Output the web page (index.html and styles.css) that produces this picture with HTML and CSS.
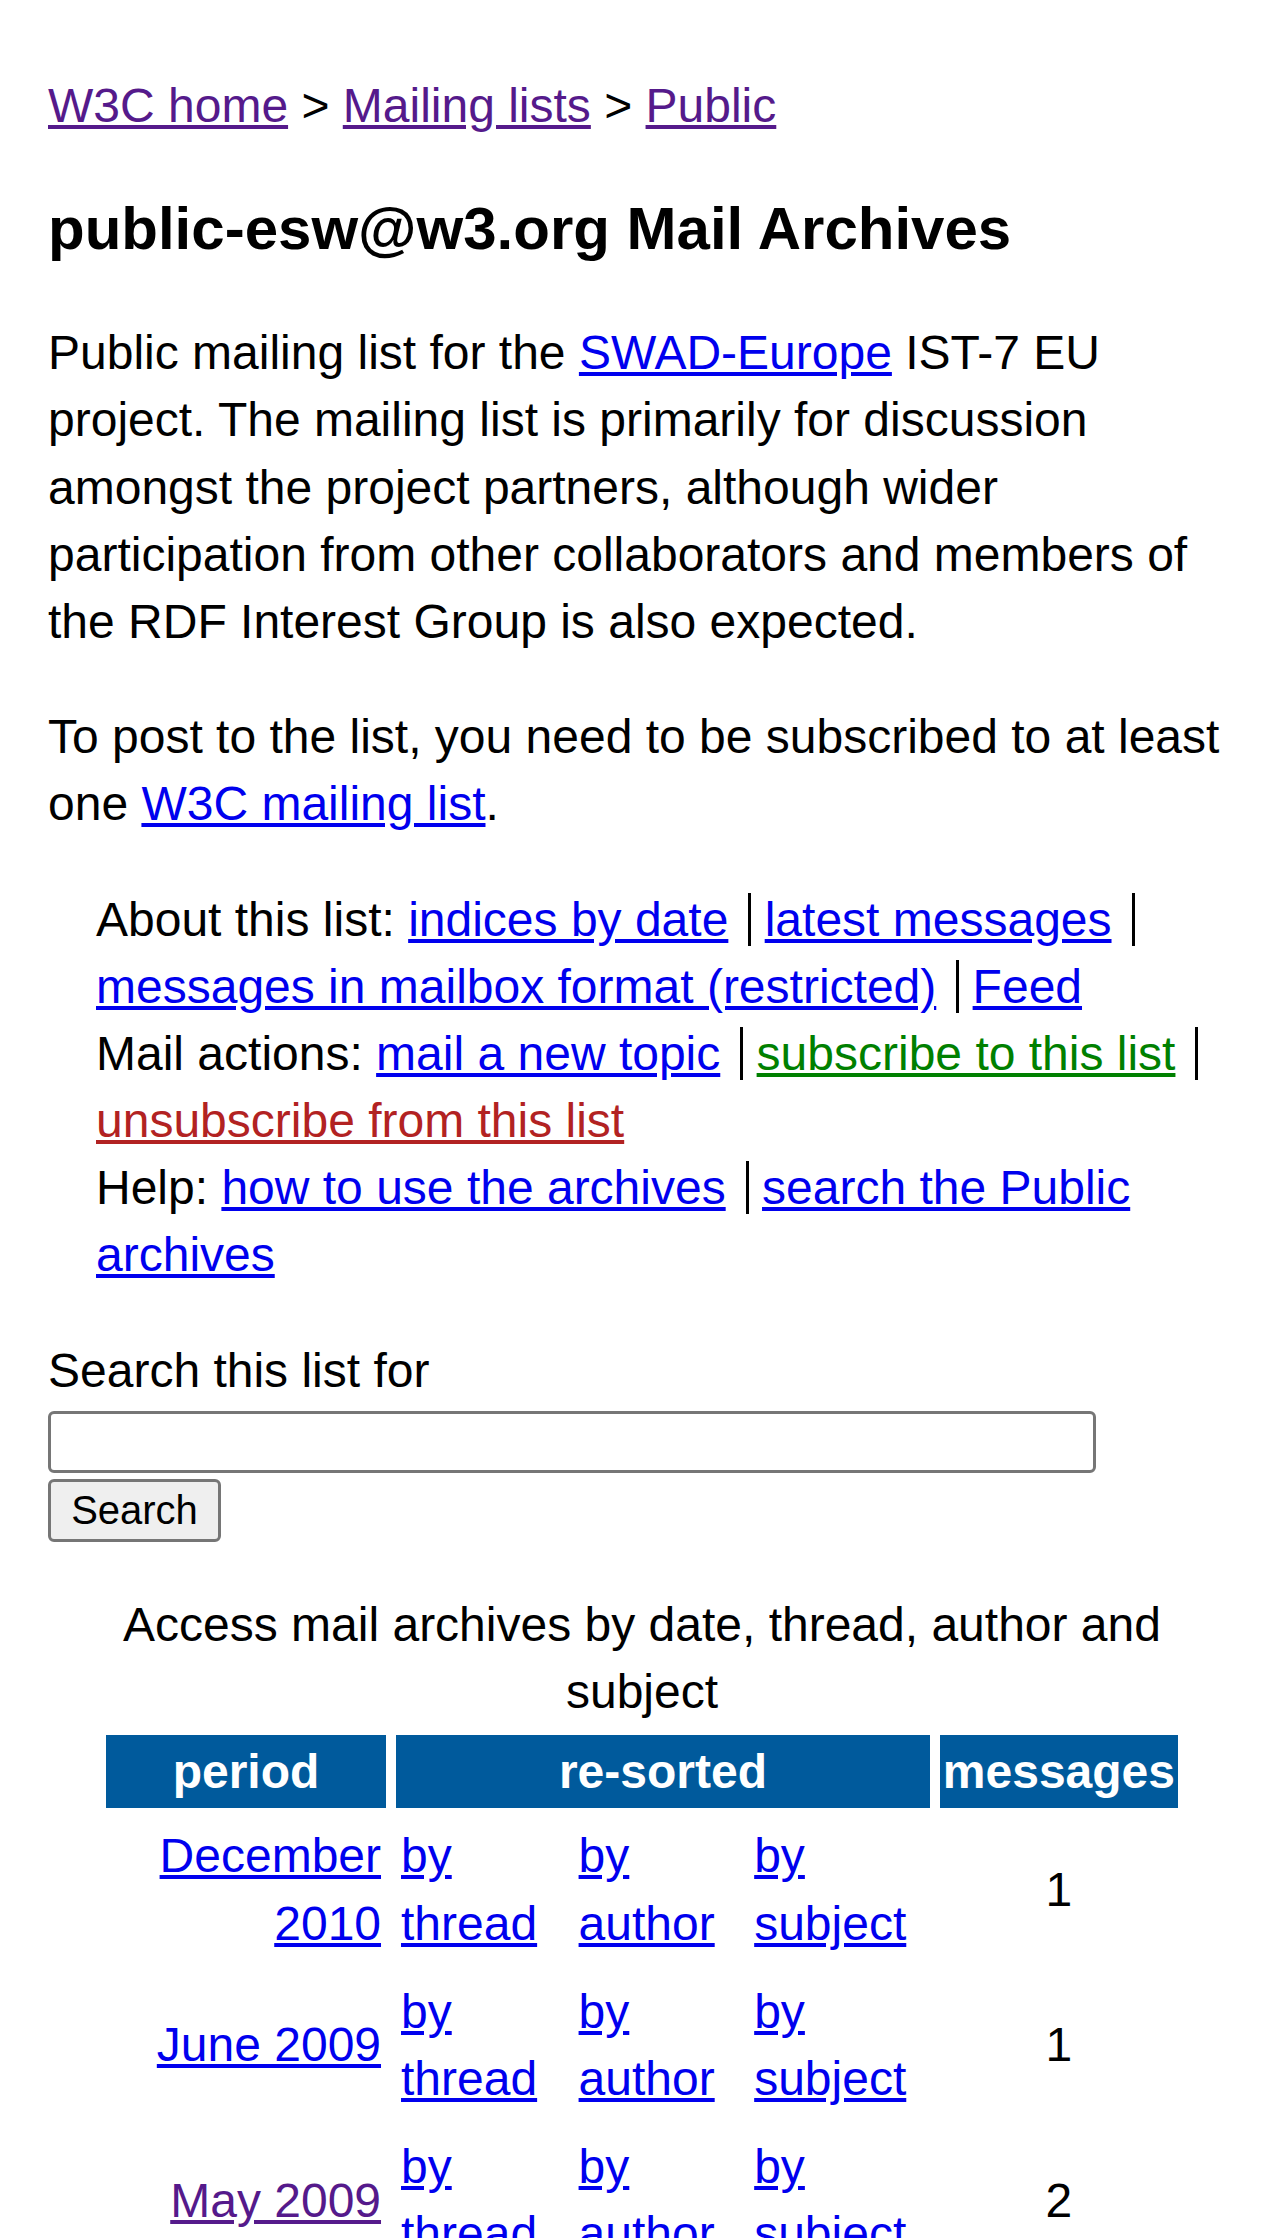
FILE: index.html
```html
<!DOCTYPE html>
<html lang="en">
<head>
<meta charset="utf-8">
<title>public-esw@w3.org Mail Archives</title>
<link rel="stylesheet" href="styles.css">
</head>
<body>
<p class="crumbs"><a class="visited" href="#">W3C home</a> &gt; <a class="visited" href="#">Mailing lists</a> &gt; <a class="visited" href="#">Public</a></p>

<h1>public-esw@w3.org Mail Archives</h1>

<p>Public mailing list for the <a href="#">SWAD-Europe</a> IST-7 EU project. The mailing list is primarily for discussion amongst the project partners, although wider participation from other collaborators and members of the RDF Interest Group is also expected.</p>

<p>To post to the list, you need to be subscribed to at least one <a href="#">W3C mailing list</a>.</p>

<ul class="links">
<li>About this list: <span class="sep"><a href="#">indices by date</a></span> <span class="sep"><a href="#">latest messages</a></span> <span class="sep"><a href="#">messages in mailbox format (restricted)</a></span> <span><a href="#">Feed</a></span></li>
<li>Mail actions: <span class="sep"><a href="#">mail a new topic</a></span> <span class="sep"><a class="subscribe" href="#">subscribe to this list</a></span> <span><a class="unsubscribe" href="#">unsubscribe from this list</a></span></li>
<li>Help: <span class="sep"><a href="#">how to use the archives</a></span> <span><a href="#">search the Public archives</a></span></li>
</ul>

<form class="search-form" action="#">
<label class="search-label" for="q">Search this list for</label>
<input class="search-input" type="text" id="q" name="keywords">
<button class="search-btn" type="submit">Search</button>
</form>

<table class="archive">
<caption>Access mail archives by date, thread, author and subject</caption>
<thead>
<tr><th class="col-period">period</th><th colspan="3">re-sorted</th><th class="col-count">messages</th></tr>
</thead>
<tbody>
<tr>
<td class="period"><a href="#">December 2010</a></td>
<td class="col-thread"><a href="#">by thread</a></td>
<td class="col-author"><a href="#">by author</a></td>
<td class="col-subject"><a href="#">by subject</a></td>
<td class="count">1</td>
</tr>
<tr>
<td class="period"><a href="#">June 2009</a></td>
<td class="col-thread"><a href="#">by thread</a></td>
<td class="col-author"><a href="#">by author</a></td>
<td class="col-subject"><a href="#">by subject</a></td>
<td class="count">1</td>
</tr>
<tr>
<td class="period"><a class="visited" href="#">May 2009</a></td>
<td class="col-thread"><a href="#">by thread</a></td>
<td class="col-author"><a href="#">by author</a></td>
<td class="col-subject"><a href="#">by subject</a></td>
<td class="count">2</td>
</tr>
</tbody>
</table>
</body>
</html>
```

FILE: styles.css
```css
html {
  background: #fff;
}

body {
  margin: 0;
  padding: 24px 48px;
  font-family: "Liberation Sans", Arial, sans-serif;
  font-size: 48px;
  line-height: 1.4;
  color: #000;
  background: #fff;
}

p {
  margin: 48px 0;
}

h1 {
  font-size: 60px;
  line-height: 1.4;
  font-weight: bold;
  margin: 48px 0;
}

a {
  color: #0000ee;
}

a.visited {
  color: #551a8b;
}

a.subscribe {
  color: #008000;
}

a.unsubscribe {
  color: #b22222;
}

.links {
  list-style: none;
  margin: 48px 0;
  padding: 0 0 0 48px;
}

.sep {
  border-right: 3px solid #000;
  padding-right: 20px;
}

.search-form {
  margin: 48px 0;
}

.search-label {
  display: block;
}

.search-input {
  display: block;
  box-sizing: border-box;
  width: 1048px;
  height: 62px;
  margin: 7px 0 0;
  padding: 0 6px;
  border: 3px solid #767676;
  border-radius: 6px;
  background: #fff;
  font-family: "Liberation Sans", Arial, sans-serif;
  font-size: 40px;
}

.search-btn {
  display: block;
  box-sizing: border-box;
  width: 173px;
  height: 63px;
  margin: 6px 0 0;
  padding: 0;
  border: 3px solid #767676;
  border-radius: 6px;
  background: #efefef;
  color: #000;
  font-family: "Liberation Sans", Arial, sans-serif;
  font-size: 40px;
  line-height: 1;
}

.archive {
  margin: 49px 48px 48px;
  border-spacing: 10px;
}

.archive caption {
  text-align: center;
}

.archive th {
  background: #005a9c;
  color: #fff;
  font-weight: bold;
  padding: 3px;
}

.archive td {
  padding: 4px 5px 7px;
  vertical-align: middle;
  text-align: left;
}

.archive .col-period {
  width: 275px;
}

.archive .col-thread {
  width: 158px;
}

.archive .col-author {
  width: 156px;
}

.archive .col-subject {
  width: 171px;
}

.archive td.period {
  text-align: right;
}

.archive td.count {
  text-align: center;
}
```
